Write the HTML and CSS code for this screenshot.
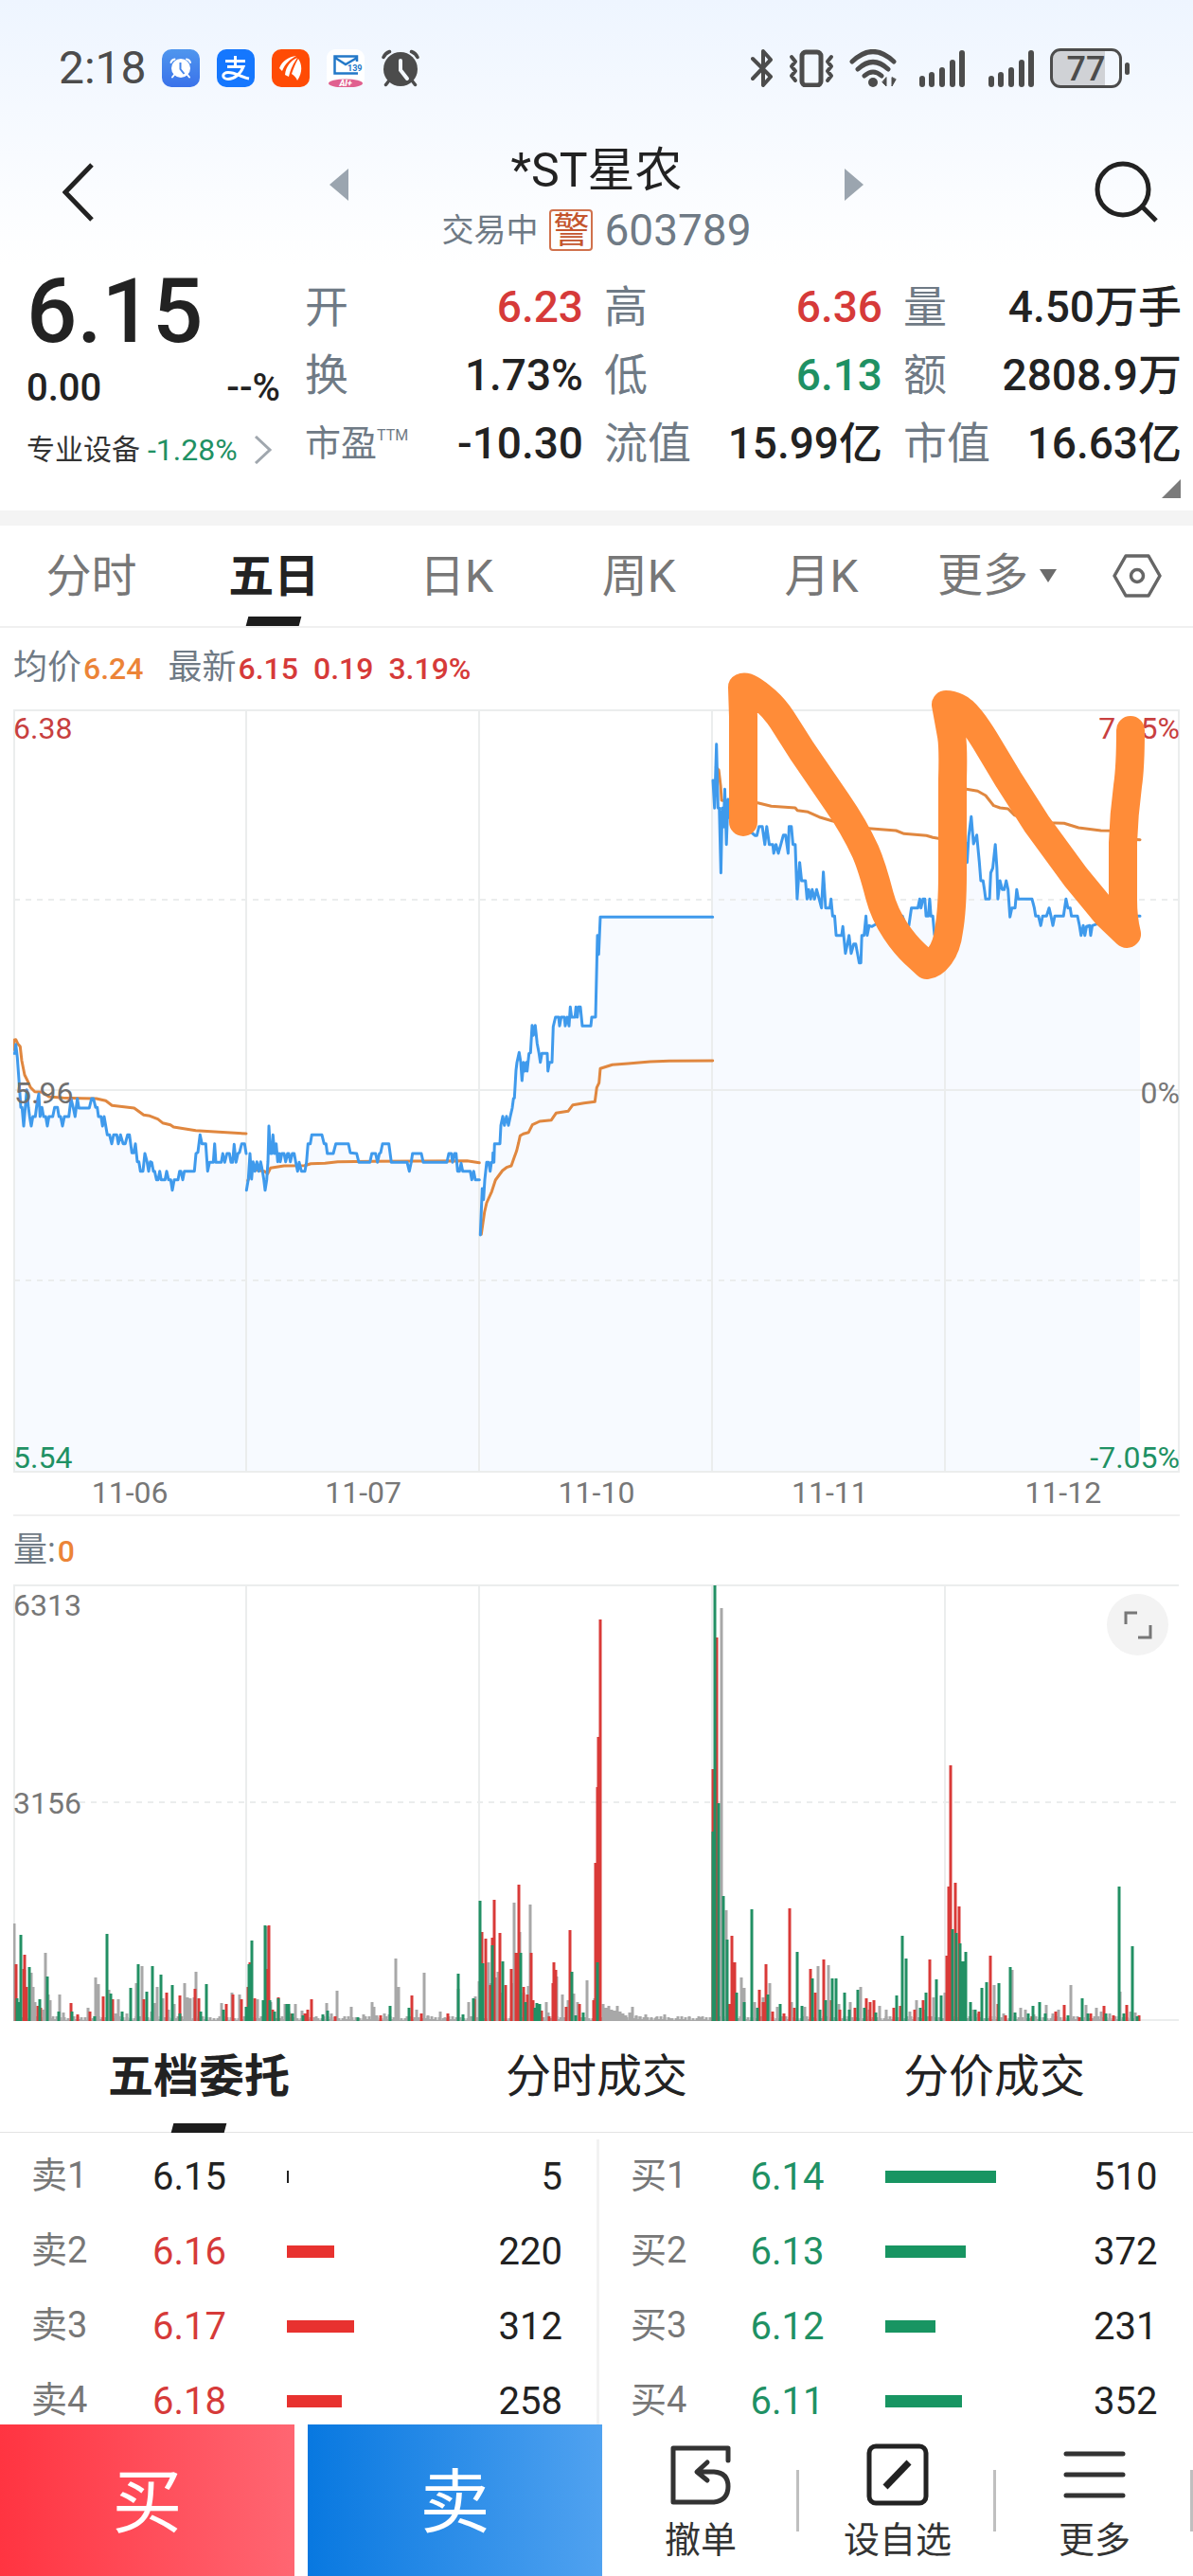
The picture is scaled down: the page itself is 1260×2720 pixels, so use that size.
FILE: index.html
```html
<!DOCTYPE html>
<html lang="zh-CN">
<head>
<meta charset="utf-8">
<meta name="viewport" content="width=device-width, initial-scale=1">
<title>*ST星农 603789</title>
<link rel="stylesheet" href="styles.css">
</head>
<body>
<header class="top">
  <div class="status">
    <div class="status-side">
      <span class="clock">2:18</span>
      <svg class="app" viewBox="0 0 40 40"><defs><linearGradient id="clk" x1="0" y1="0" x2="0" y2="1"><stop offset="0" stop-color="#4f96ee"/><stop offset="1" stop-color="#3a72ea"/></linearGradient></defs><rect width="40" height="40" rx="10" fill="url(#clk)"/><g fill="none" stroke="#fff" stroke-width="2" stroke-linecap="round"><path d="M9.500 14q1-3 4-3.500M30 14q-1-3-4-3.500M13 27l-2 2.500M27 27l2 2.500"/></g><circle cx="20" cy="20" r="10" fill="#fff"/><path d="M19.500 14v7l4 5" fill="none" stroke="#4686ec" stroke-width="2"/></svg>
      <svg class="app" viewBox="0 0 40 40"><rect width="40" height="40" rx="10" fill="#1577fe"/><g fill="none" stroke="#fff" stroke-width="3"><path d="M9 12.500h21M19.500 7v11M11 18.500h17c-3 8-10 13-16 13-7 0-7-7 0-7 8 0 14 5 22 6.500"/></g></svg>
      <svg class="app" viewBox="0 0 40 40"><rect width="40" height="40" rx="10" fill="#ff4b05"/><g fill="#fff"><path d="M8 20C11 12 18 8 26 7c-6 3-12 8-15 16z"/><path d="M14 27c1-9 6-15 13-18-4 6-7 11-9 20z"/><path d="M21 26c2-6 4-11 7-16 4 6 5 14-1 23-1-3-3-5-6-7z"/></g></svg>
      <svg class="app" viewBox="0 0 40 40"><rect width="40" height="40" rx="9" fill="#fff"/><path d="M32 13V7.500H8.500v18H33M9 9l11 7L32 9" fill="none" stroke="#2378c8" stroke-width="2.500"/><text x="22" y="23" class="mail-num">139</text><ellipse cx="20" cy="36" rx="18" ry="4.500" fill="#e0608f"/><text x="20" y="39" text-anchor="middle" class="mail-tag">AI+</text></svg>
      <svg class="app" viewBox="0 0 40 40"><g fill="none" stroke="#4c4c4c" stroke-width="3.500" stroke-linecap="round"><path d="M2 8.500Q4 4 8.500 2.500M38 8.500Q36 4 31.500 2.500M8 33l-3.500 4.500M32 33l3.500 4.500"/></g><circle cx="20" cy="21" r="18" fill="#4c4c4c"/><path d="M20 12v10l7 9" fill="none" stroke="#f3f8ff" stroke-width="4" stroke-linecap="round"/></svg>
    </div>
    <div class="status-side">
      <svg width="24" height="40" viewBox="0 0 24 40" fill="none" stroke="#4c4c4c" stroke-width="4" stroke-linejoin="round" stroke-linecap="round"><path d="M2 10l19 19-8 9V2l8 9L2 31"/></svg>
      <svg width="48" height="40" viewBox="0 0 48 40" fill="none" stroke="#4c4c4c" stroke-width="5" stroke-linejoin="round" stroke-linecap="round"><rect x="14" y="3" width="20" height="35" rx="4"/><path stroke-width="4" d="M3 8l4 5-4 5 4 5-4 5 4 5M45 8l-4 5 4 5-4 5 4 5-4 5"/></svg>
      <svg class="wifi" width="50" height="40" viewBox="0 0 50 40" fill="none" stroke="#4c4c4c" stroke-width="5" stroke-linecap="round"><path d="M3 13Q25-8 47 13M9 21Q25 6 41 21M16 28q9-8 18 0"/><circle cx="25" cy="35" r="5" fill="#4c4c4c" stroke="none"/><path d="M39 30v9l-4-4zM45 30v9l4-7z" fill="#4c4c4c" stroke-width="1"/></svg>
      <svg class="signal" width="50" height="40" viewBox="0 0 50 40" stroke="#4c4c4c" stroke-width="6" stroke-linecap="round"><path d="M4 31v6M14 27v10M25 22v15M36 14v23M46 4v33"/></svg>
      <svg class="signal" width="50" height="40" viewBox="0 0 50 40" stroke="#4c4c4c" stroke-width="6" stroke-linecap="round"><path d="M4 31v6M14 27v10M25 22v15M36 14v23M46 4v33"/></svg>
      <span class="battery"><b>77</b></span>
    </div>
  </div>
  <div class="title-row">
    <button class="icon-btn back" aria-label="返回"><svg width="34" height="62" viewBox="0 0 34 62"><path d="M31 2L3 31l28 29" fill="none" stroke="#222" stroke-width="5"/></svg></button>
    <button class="icon-btn" aria-label="上一只"><svg width="20" height="34" viewBox="0 0 20 34"><path d="M20 0v34L0 17z" fill="#9ba5af"/></svg></button>
    <div class="name">
      <h1>*ST星农</h1>
      <p class="sub"><span>交易中</span><span class="warn">警</span><span class="code">603789</span></p>
    </div>
    <button class="icon-btn" aria-label="下一只"><svg width="20" height="34" viewBox="0 0 20 34"><path d="M0 0v34l20-17z" fill="#9ba5af"/></svg></button>
    <button class="icon-btn search" aria-label="搜索"><svg width="68" height="66" viewBox="0 0 68 66" fill="none" stroke="#222" stroke-width="5"><circle cx="30" cy="30" r="27"/><path d="M50 48l15 15"/></svg></button>
  </div>
  <section class="quote">
    <div class="last">
      <strong class="price">6.15</strong>
      <div class="change"><span>0.00</span><span>--%</span></div>
      <a class="sector" href="#sector"><span>专业设备</span><span class="pct down">-1.28%</span><svg width="20" height="30" viewBox="0 0 20 30"><path d="M2 1l15 14L2 29" fill="none" stroke="#a0a7ae" stroke-width="3"/></svg></a>
    </div>
    <dl class="stats">
      <div><dt>开</dt><dd class="up">6.23</dd></div>
      <div><dt>高</dt><dd class="up">6.36</dd></div>
      <div><dt>量</dt><dd>4.50万手</dd></div>
      <div><dt>换</dt><dd>1.73%</dd></div>
      <div><dt>低</dt><dd class="down">6.13</dd></div>
      <div><dt>额</dt><dd>2808.9万</dd></div>
      <div><dt class="small">市盈<sup>TTM</sup></dt><dd>-10.30</dd></div>
      <div><dt>流值</dt><dd>15.99亿</dd></div>
      <div><dt>市值</dt><dd>16.63亿</dd></div>
    </dl>
    <svg class="expand" width="20" height="20" viewBox="0 0 20 20"><path d="M20 0v20H0z" fill="#7b7b7b"/></svg>
  </section>
</header>

<main>
  <nav class="periods">
    <a href="#m">分时</a>
    <a href="#d5" class="on">五日</a>
    <a href="#dk">日K</a>
    <a href="#wk">周K</a>
    <a href="#mk">月K</a>
    <a href="#more" class="more">更多<svg width="18" height="14" viewBox="0 0 18 14"><path d="M0 0h18L9 14z" fill="#6b6b6b"/></svg></a>
    <button class="icon-btn gear" aria-label="设置"><svg width="52" height="48" viewBox="0 0 52 48" fill="none" stroke="#666" stroke-width="3.500" stroke-linejoin="round"><path d="M14 3h24l12 21-12 21H14L2 24z"/><circle cx="26" cy="24" r="6.500"/></svg></button>
  </nav>
  <p class="legend"><span>均价<b class="avg">6.24</b></span><span>最新<b class="up">6.15</b><b class="up">0.19</b><b class="up">3.19%</b></span></p>
  <section class="chart">
    <svg id="price" viewBox="14 749 1232 806" aria-label="五日走势"></svg>
    <span class="tag tl up">6.38</span>
    <span class="tag tr up">7.05%</span>
    <span class="tag ml">5.96</span>
    <span class="tag mr">0%</span>
    <span class="tag bl down">5.54</span>
    <span class="tag br down">-7.05%</span>
    <svg class="ink" viewBox="14 749 1232 806"><path d="M785 868V757L784 726Q790 723 809 740Q818 748 826 760L847 793L884 847Q902 873 914 899Q921 915 929 946Q934 965 946 983Q956 998 967 1008L979 1019Q986 1018 992 1010Q1000 1000 1002 983Q1006 960 1006 923V823Q1007 790 1005 777L999 744Q1008 744 1017 751Q1027 760 1041 783L1065 823L1095 870L1136 926L1169 966L1190 986Q1186 970 1186 950V890Q1187 860 1191 830Q1194 810 1194 771"/></svg>
  </section>
  <ol class="dates"><li>11-06</li><li>11-07</li><li>11-10</li><li>11-11</li><li>11-12</li></ol>
  <p class="legend vol-legend"><span>量:<b class="avg">0</b></span></p>
  <section class="chart">
    <svg id="volume" viewBox="14 1673 1232 461" aria-label="成交量"></svg>
    <span class="tag vt">6313</span>
    <span class="tag vm">3156</span>
    <button class="icon-btn full" aria-label="全屏"><svg width="30" height="30" viewBox="0 0 30 30" fill="none" stroke="#777" stroke-width="3"><path d="M2 14V2h12M28 15v13H15"/></svg></button>
  </section>

  <nav class="books">
    <a href="#book" class="on">五档委托</a><a href="#ticks">分时成交</a><a href="#levels">分价成交</a>
  </nav>
  <section class="orders">
    <table>
      <tr><th scope="row">卖1</th><td>6.15</td><td><i class="bar flat" style="width:2px"></i></td><td>5</td></tr>
      <tr><th scope="row">卖2</th><td class="up">6.16</td><td><i class="bar sell" style="width:50px"></i></td><td>220</td></tr>
      <tr><th scope="row">卖3</th><td class="up">6.17</td><td><i class="bar sell" style="width:71px"></i></td><td>312</td></tr>
      <tr><th scope="row">卖4</th><td class="up">6.18</td><td><i class="bar sell" style="width:58px"></i></td><td>258</td></tr>
    </table>
    <table>
      <tr><th scope="row">买1</th><td class="down">6.14</td><td><i class="bar buy" style="width:117px"></i></td><td>510</td></tr>
      <tr><th scope="row">买2</th><td class="down">6.13</td><td><i class="bar buy" style="width:85px"></i></td><td>372</td></tr>
      <tr><th scope="row">买3</th><td class="down">6.12</td><td><i class="bar buy" style="width:53px"></i></td><td>231</td></tr>
      <tr><th scope="row">买4</th><td class="down">6.11</td><td><i class="bar buy" style="width:81px"></i></td><td>352</td></tr>
    </table>
  </section>
</main>

<footer class="actions">
  <button class="trade trade-buy">买</button>
  <button class="trade trade-sell">卖</button>
  <div class="tools">
    <button class="tool"><svg width="66" height="66" viewBox="0 0 66 66" fill="none" stroke="#333" stroke-width="5" stroke-linecap="round" stroke-linejoin="round"><path d="M62 18V5H4v57h43q15-2 15-16.500T47 30H30M40 20L29 30l11 9"/></svg>撤单</button>
    <button class="tool"><svg width="66" height="66" viewBox="0 0 66 66" fill="none" stroke="#222" stroke-width="5"><rect x="3" y="3" width="60" height="60" rx="7"/><path d="M20 46L45 20" stroke-width="7"/></svg>设自选</button>
    <button class="tool"><svg width="66" height="66" viewBox="0 0 66 66" stroke="#333" stroke-width="5" stroke-linecap="round"><path d="M3 11h60M3 33h60M3 55h60"/></svg>更多</button>
  </div>
</footer>
<script src="chart.js"></script>
</body>
</html>
```

FILE: styles.css
```css
* { box-sizing: border-box; }
body {
  margin: 0;
  background: #fff;
  color: #222;
  font-family: Roboto, "Noto Sans CJK SC", sans-serif;
}
h1, p, dl, dd, ol { margin: 0; padding: 0; font-weight: 400; }
ol { list-style: none; }
a { color: inherit; text-decoration: none; }
button { border: 0; margin: 0; padding: 0; background: none; font: inherit; color: inherit; }
svg { display: block; flex: none; }
.icon-btn { display: flex; align-items: center; justify-content: center; }
.up { color: #d63a39; }
.down { color: #1f9164; }

.top {
  background: linear-gradient(#eef5ff, #fff 280px);
  border-bottom: 16px solid #f4f4f4;
}
.status {
  display: flex;
  justify-content: space-between;
  align-items: center;
  height: 144px;
  padding: 0 75px 0 62px;
}
.status-side { display: flex; align-items: center; gap: 16px; }
.clock { font-size: 48px; line-height: 48px; color: #4c4c4c; }
.app { width: 40px; height: 40px; margin-right: 2px; }
.mail-num { font: 700 9px Roboto, sans-serif; fill: #2378c8; }
.mail-tag { font: italic 900 9px Roboto, sans-serif; fill: #fff; }
.signal { margin-left: 7px; }
.battery {
  position: relative;
  display: block;
  width: 76px;
  height: 42px;
  border: 3px solid #4c4c4c;
  border-radius: 11px;
  background: linear-gradient(90deg, #d0d2d6 78%, transparent 78%);
  color: #4c4c4c;
  font-size: 36px;
  line-height: 38px;
  text-align: center;
}
.battery b { font-weight: 500; }
.battery::after {
  content: "";
  position: absolute;
  right: -11px;
  top: 12px;
  width: 5px;
  height: 13px;
  border-radius: 3px;
  background: #4c4c4c;
}

.title-row {
  display: grid;
  grid-template-columns: 348px 20px 1fr 20px 348px;
  height: 134px;
}
.title-row .icon-btn { height: 102px; }
.title-row .back { height: 118px; justify-content: flex-start; padding-left: 66px; }
.title-row .search { height: 118px; justify-content: flex-end; padding-right: 36px; }
.name { text-align: center; }
.name h1 { font-size: 50px; line-height: 72px; }
.sub {
  display: flex;
  justify-content: center;
  align-items: center;
  height: 54px;
  color: #6f7a85;
  font-size: 34px;
  line-height: 44px;
}
.warn {
  width: 46px;
  height: 44px;
  margin: 0 12px;
  border: 2px solid #d0714c;
  border-radius: 4px;
  color: #c4552d;
  font-size: 38px;
  line-height: 40px;
}
.code { font-size: 46px; }

.quote {
  position: relative;
  display: grid;
  grid-template-columns: 268px 1fr;
  gap: 26px;
  padding: 10px 12px 35px 28px;
}
.price { display: block; font-size: 94px; line-height: 82px; font-weight: 500; }
.change {
  display: flex;
  justify-content: space-between;
  font-size: 40px;
  line-height: 80px;
  font-weight: 500;
}
.sector { display: flex; align-items: center; font-size: 30px; line-height: 50px; color: #333; }
.sector .pct { margin: 0 auto 0 8px; font-size: 32px; }
.sector svg { margin-right: 8px; }
.stats {
  display: grid;
  grid-template-columns: repeat(3, 1fr);
  column-gap: 22px;
  color: #222;
  line-height: 72px;
}
.stats div { display: flex; justify-content: space-between; }
.stats dt { font-size: 46px; color: #6f7a85; }
.stats .small { font-size: 38px; display: flex; }
.stats sup { font-size: 16px; line-height: 56px; }
.stats dd { font-size: 46px; font-weight: 500; }
.stats .up { color: #d63a39; }
.stats .down { color: #1f9164; }
.expand { position: absolute; right: 13px; bottom: 13px; }

.periods {
  display: flex;
  height: 108px;
  border-bottom: 2px solid #f0f0f0;
  color: #777;
  font-size: 48px;
  line-height: 108px;
  text-align: center;
}
.periods a { flex: 1; }
.periods .more { flex: 0 0 178px; display: flex; align-items: center; justify-content: center; gap: 12px; }
.periods .gear { width: 118px; }
.on { position: relative; color: #222; font-weight: 700; }
.on::after {
  content: "";
  position: absolute;
  left: 50%;
  bottom: 0;
  width: 56px;
  height: 10px;
  margin-left: -28px;
  background: #1c1c1c;
  transform: skewX(-15deg);
}

.legend {
  display: flex;
  gap: 26px;
  height: 86px;
  padding: 0 14px;
  color: #6f7a85;
  font-size: 36px;
  line-height: 84px;
}
.legend b { margin: 0 14px 0 2px; font-size: 32px; font-weight: 500; }
.legend b:last-child { margin-right: 0; }
.legend .avg { color: #ec8437; }
.vol-legend { height: 72px; line-height: 72px; }

.chart { position: relative; margin: 0 14px; }
.chart > svg { width: 100%; height: auto; }
.chart .ink {
  position: absolute;
  left: 0;
  top: 0;
  overflow: visible;
  fill: none;
  stroke: #ff8c38;
  stroke-width: 30;
  stroke-linecap: round;
  stroke-linejoin: round;
  pointer-events: none;
}
.tag { position: absolute; font-size: 32px; line-height: 32px; color: #777; }
.tag.up { color: #c8403f; }
.tag.down { color: #1f9164; }
.tl { left: 0; top: 4px; }
.tr { right: 0; top: 4px; }
.ml { left: 1px; top: 50%; margin-top: -14px; color: #707070; }
.mr { right: 0; top: 50%; margin-top: -14px; }
.bl { left: 0; bottom: 0; }
.br { right: 0; bottom: 0; }
.vt { left: 0; top: 6px; }
.vm { left: 0; top: 50%; margin-top: -16px; }
.full {
  position: absolute;
  right: 12px;
  top: 10px;
  width: 65px;
  height: 65px;
  border-radius: 50%;
  background: #f3f3f3;
}
.grid { fill: none; stroke: #ebeded; stroke-width: 2; }
.dash { fill: none; stroke: #ebeded; stroke-width: 2; stroke-dasharray: 6 6; }
.line { fill: none; stroke: #3f9aec; stroke-width: 3; stroke-linejoin: round; stroke-linecap: round; }
.mean { fill: none; stroke: #e0873f; stroke-width: 3; stroke-linejoin: round; stroke-linecap: round; }
.area { fill: #3f8cff; fill-opacity: .045; }
.v { fill: none; stroke-width: 3; }
.v-gray { stroke: #a8a8a8; }
.v-red { stroke: #d93a38; }
.v-green { stroke: #229064; }

.dates {
  display: grid;
  grid-template-columns: repeat(5, 1fr);
  height: 46px;
  margin: 0 14px;
  border-bottom: 2px solid #f0f0f0;
  color: #777;
  font-size: 32px;
  line-height: 42px;
  text-align: center;
}

.books {
  display: grid;
  grid-template-columns: repeat(3, 1fr);
  height: 118px;
  border-bottom: 1px solid #e3e3e3;
  font-size: 48px;
  line-height: 118px;
  text-align: center;
}
.orders { display: grid; grid-template-columns: 1fr 1fr; padding-top: 7px; }
.orders table { width: 100%; table-layout: fixed; border-collapse: collapse; font-size: 40px; }
.orders tr { height: 79px; }
.orders th {
  width: 161px;
  padding: 0 0 0 33px;
  color: #777;
  font-size: 38px;
  font-weight: 400;
  line-height: 76px;
  text-align: left;
  vertical-align: top;
}
.orders td { padding: 0; line-height: 78px; }
.orders td:nth-child(2) { width: 142px; }
.orders td:last-child { width: 130px; padding-right: 36px; text-align: right; }
.orders table + table { border-left: 3px solid #f2f2f2; }
.bar { display: block; height: 13px; }
.flat { background: #222; }
.sell { background: #e8322f; }
.buy { background: #189562; }

.actions {
  position: fixed;
  left: 0;
  right: 0;
  bottom: 0;
  display: flex;
  height: 160px;
  background: #fff;
}
.trade { flex: 311; color: #fff; font-size: 74px; line-height: 160px; padding-top: 3px; }
.trade-buy { margin-right: 14px; background: linear-gradient(90deg, #ff3441, #ff6672); }
.trade-sell { background: linear-gradient(90deg, #0878e0, #50a2f0); }
.tools { flex: 624; display: grid; grid-template-columns: repeat(3, 1fr); }
.tool {
  position: relative;
  display: flex;
  flex-direction: column;
  align-items: center;
  gap: 12px;
  padding-top: 20px;
  color: #333;
  font-size: 38px;
  line-height: 48px;
}
.tool::after {
  content: "";
  position: absolute;
  right: 0;
  top: 48px;
  width: 3px;
  height: 65px;
  background: #bfbfbf;
}
```

FILE: chart.js
```js
const NS = "http://www.w3.org/2000/svg";
function add(svg, cls, d) {
  const p = document.createElementNS(NS, "path");
  p.setAttribute("class", cls);
  p.setAttribute("d", d);
  svg.appendChild(p);
}

// Each session: origin and sampling step, then flat x,y samples.
const line = [
  [0, 1040, 3, "42 217 47 217 50 188 55 230 60 300 66 388 70 388 75 447 80 388 85 332 90 388 94 417 99 447 104 417 112 417 118 370 123 345 127 417 133 388 138 417 145 417 150 447 155 417 167 417 173 388 182 388 187 417 192 417 198 447 204 417 218 417 225 360 232 388 238 417 245 360 250 390 283 390 290 360 296 360 303 388 308 388 312 417 320 417 325 447 330 417 340 475 347 475 354 503 360 475 370 475 375 503 382 475 390 503 397 503 404 475 410 475 418 532 424 532 429 503 435 560 440 560 445 590 453 590 459 534 466 560 471 590 476 560 481 562 486 590 490 590 496 617 501 617 506 590 511 617 523 617 528 590 534 617 541 617 546 650 552 617 564 617 569 590 573 590 579 617 584 590 616 590 621 534 627 530 634 475 640 503 652 503 658 590 664 562 676 562 680 503 684 562 701 562 706 534 712 562 719 534 727 534 732 562 737 562 742 505 748 562 754 534 759 530 766 503 775 503 780 534"],
  [0, 1040, 3, "781 650 787 615 792 534 797 615 802 560 808 590 814 560 820 590 826 560 832 590 836 617 840 650 845 617 849 560 852 447 857 534 862 534 865 475 870 534 875 503 880 560 885 534 888 560 893 534 900 534 905 560 911 534 915 534 920 560 926 534 932 534 937 560 943 590 948 562 955 590 966 590 971 562 976 503 983 503 988 475 1020 475 1027 503 1033 503 1037 534 1056 534 1064 503 1104 503 1110 532 1130 534 1137 562 1172 562 1178 534 1190 534 1196 562 1202 534 1206 532 1212 503 1232 503 1240 562 1290 562 1297 590 1303 562 1307 534 1335 534 1341 562 1416 562 1422 534 1430 534 1434 562 1440 534 1445 534 1450 590 1456 590 1461 565 1466 590 1490 590 1495 617 1501 590 1506 617 1519 617"],
  [490, 940, 3, "52 1092 58 945 62 980 66 917 72 862 78 862 83 890 87 862 91 862 92 832 95 862 97 803 114 803 117 745 123 716 128 745 135 716 141 745 147 716 153 690 157 660 160 658 165 570 168 545 175 514 180 545 184 603 189 545 193 573 198 545 200 573 206 517 211 515 216 428 220 460 226 428 232 485 238 517 242 545 247 517 264 517 266 573 271 545 279 545 283 432 290 402 300 402 303 430 308 402 318 402 321 430 327 402 333 430 337 370 341 402 352 402 355 370 359 402 363 370 369 370 375 430 402 430 405 402 417 402 423 143 427 203 432 85 788 85"],
  [730, 690, 2.958, "68 402 73 490 79 287 84 490 88 490 93 695 97 490 101 550 105 430 110 605 115 462 120 520 150 548 192 570 200 577 205 577 212 548 222 548 230 605 236 548 244 605 255 605 258 633 265 605 272 633 280 605 288 575 295 575 303 633 306 548 313 548 318 605 325 605 331 778 339 662 345 720 357 720 362 778 367 748 373 778 378 748 385 778 392 748 400 778 407 806 413 692 420 806 433 806 437 778 442 832 448 832 453 893 470 893 474 865 482 950 488 920 493 893 500 950 508 920 514 920 525 980 530 980 533 893 540 893 546 832 550 893 556 862 565 865 590 850 650 832 660 832 670 862 680 862 688 806 708 806 714 778 718 806 724 778 730 778 734 832 741 832 745 778 749 832 755 832 760 890 775 930 792 860"],
  [730, 690, 2.958, "795 800 840 700 858 600 862 662 867 580 875 517 882 603 892 575 900 660 905 720 912 720 916 748 920 778 932 778 936 695 942 680 950 605 955 680 958 778 965 720 972 748 978 748 984 720 990 748 996 835 1002 806 1012 806 1017 748 1022 778 1065 778 1072 806 1076 832 1085 832 1092 862 1098 832 1110 832 1118 806 1124 832 1130 862 1136 832 1163 832 1171 778 1177 806 1184 806 1188 832 1207 832 1213 862 1218 893 1225 862 1230 893 1235 865 1245 862 1248 893 1253 862 1340 832 1402 832"]
];
const mean = [
  [0, 1040, 3, "42 205 44 175 50 173 56 186 64 195 69 240 78 285 88 305 97 325 110 338 135 340 155 354 200 358 260 359 305 360 335 367 355 382 425 390 455 412 475 415 500 425 515 437 540 443 550 450 620 461 680 465 780 471"],
  [0, 1040, 3, "785 620 800 585 838 590 848 598 857 580 900 573 965 572 985 566 1030 565 1070 560 1180 559 1480 557 1519 563"],
  [490, 940, 3, "55 1090 65 1020 72 990 88 955 100 918 122 888 135 878 150 873 158 850 167 825 173 800 178 778 188 772 205 767 217 743 240 732 277 728 292 706 330 700 345 680 380 674 415 670 421 625 428 610 432 565 470 553 520 549 590 543 650 541 788 540"],
  [730, 690, 2.958, "78 360 86 370 92 420 95 465 120 470 208 473 250 484 325 489 332 497 365 502 400 518 440 530 535 553 640 561 665 571 735 577 755 583 772 586 792 586"],
  [730, 690, 2.958, "795 420 860 430 895 436 920 450 945 482 965 489 990 492 1010 512 1110 536 1165 538 1210 552 1280 561 1340 562 1370 588 1402 590"]
];
function points([ox, oy, sx, text]) {
  const n = text.split(" ").map(Number), out = [];
  for (let i = 0; i < n.length; i += 2) out.push([(ox + n[i] / sx).toFixed(1), (oy + n[i + 1] / 3).toFixed(1)]);
  return out;
}

const price = document.getElementById("price");
line.forEach(s => {
  const p = points(s);
  add(price, "area", "M" + p.join("L") + "V1554H" + p[0][0] + "Z");
});
add(price, "grid", "M15 750H1245V1554H15ZM15 1151H1245M260 750V1554M506 750V1554M752 750V1554M998 750V1554");
add(price, "dash", "M15 950H1245M15 1352H1245");
mean.forEach(s => add(price, "mean", "M" + points(s).join("L")));
line.forEach(s => add(price, "line", "M" + points(s).join("L")));

// Volume bars: x,height pairs by direction.
const gray = "15,103 48,72 33,51 35,36 26,54 37,20 51,28 53,22 46,12 63,28 67,9 93,14 101,46 104,39 115,33 125,23 122,8 134,8 144,40 150,58 163,19 160,10 166,36 172,24 178,12 184,18 195,40 198,25 201,24 207,52 205,25 234,19 245,30 253,28 262,10 272,23 282,100 286,20 301,18 305,10 312,18 319,11 334,5 345,19 350,8 356,32 371,15 377,4 384,7 393,20 395,15 398,6 406,8 411,7 418,66 421,36 440,12 448,51 452,6 465,10 470,4 484,34 495,20 502,26 498,5 506,42 516,62 519,40 523,46 526,52 530,30 541,40 543,125 549,94 553,30 558,37 560,123 565,14 577,20 579,9 588,47 594,28 600,22 606,29 610,20 620,43 628,24 637,18 640,14 643,16 646,12 649,11 652,16 655,10 658,8 661,6 665,9 668,15 672,6 676,5 682,7 688,4 693,4 702,7 708,3 728,5 740,4 762,436 767,117 783,46 786,35 797,20 806,25 813,40 821,15 836,20 850,15 864,58 875,59 886,18 898,20 909,36 918,12 929,16 936,12 961,10 968,22 976,12 986,25 998,30 1018,55 1028,12 1033,8 1050,38 1060,8 1069,54 1078,14 1083,12 1092,7 1105,17 1112,8 1118,12 1131,38 1147,17 1158,14 1163,10 1172,8 1183,31 1194,10 1199,9";
const red = "17,60 26,70 25,55 28,36 40,16 43,14 75,19 82,7 95,10 109,26 119,23 152,23 176,30 190,27 206,34 210,24 239,18 246,28 255,23 262,36 264,62 269,24 284,101 282,55 288,12 294,25 308,8 322,8 325,12 329,23 354,5 402,6 435,27 445,8 473,8 501,23 509,94 513,87 518,38 520,88 522,128 528,93 534,38 540,55 545,72 548,144 553,36 557,28 561,72 563,22 572,11 580,5 584,40 585,62 587,54 598,15 602,96 612,18 627,22 629,167 631,247 634,424 632,300 753,266 757,405 773,90 776,62 770,18 802,33 806,20 809,60 816,10 828,8 834,119 839,14 856,55 861,30 870,65 878,22 887,12 903,14 915,24 919,20 923,22 944,14 951,16 966,12 975,22 982,65 1000,69 1002,142 1004,270 1009,146 1013,121 1016,40 1034,10 1046,69 1054,18 1062,6 1090,5 1115,10 1124,17 1140,4 1152,8 1166,16 1176,6 1190,17 1203,6";
const green = "22,91 18,24 20,20 31,57 42,23 50,47 62,10 76,10 113,92 117,29 100,5 129,10 138,35 146,60 155,31 161,58 170,49 182,38 190,8 212,10 218,39 236,12 260,15 263,60 266,85 280,101 278,22 285,22 290,10 294,24 303,18 305,18 309,8 320,6 341,7 346,11 378,4 412,16 432,14 484,50 489,7 500,24 507,127 510,61 520,80 531,63 550,72 555,20 565,14 567,19 570,18 604,52 608,6 616,9 631,62 755,460 753,200 759,230 764,132 768,86 778,30 786,20 794,118 800,14 811,28 824,18 842,73 847,16 858,45 866,12 872,22 879,45 883,45 892,30 897,12 906,33 913,14 925,9 947,27 953,90 957,66 972,14 978,30 989,44 994,27 1006,97 1010,93 1014,82 1017,63 1020,73 1025,20 1030,12 1037,35 1042,41 1055,40 1067,57 1072,9 1086,8 1091,16 1098,20 1104,8 1128,6 1143,24 1149,8 1168,8 1182,142 1187,8 1196,79 1201,5";
const volume = document.getElementById("volume");
const bars = t => t.split(" ").map(b => "M" + b.split(",")[0] + " 2134v-" + b.split(",")[1]).join("");
add(volume, "grid", "M15 2133V1674H1245M15 2133H1245M260 1674V2133M506 1674V2133M752 1674V2133M998 1674V2133");
add(volume, "dash", "M84 1903H1245");
let tail = "";
for (let x = 16; x < 1202; x += 2) tail += "M" + x + " 2134v-" + (1 + (x * 37 % 11) % 5);
add(volume, "v v-gray", tail);
add(volume, "v v-gray", bars(gray));
add(volume, "v v-red", bars(red));
add(volume, "v v-green", bars(green));
```
